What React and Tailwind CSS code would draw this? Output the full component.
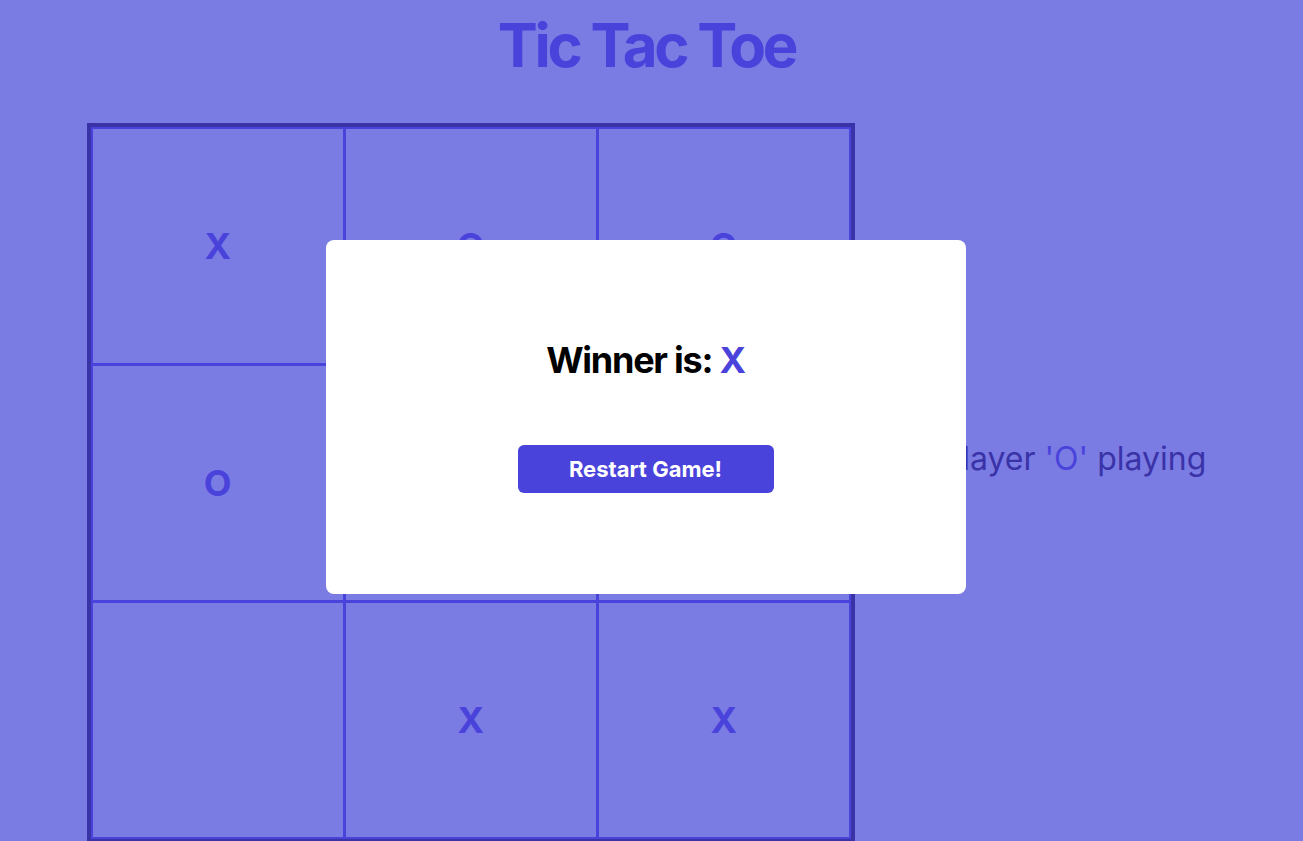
import React, { useState } from 'react';

// board state as shown: X won on the diagonal
const initialBoard = ['X', 'O', 'O', 'O', 'X', '', '', 'X', 'X'];

function Cell({ value }) {
  return (
    <div className="h-[234px] bg-[#7b7be4] flex items-center justify-center">
      <span className="text-4xl font-bold text-[#4a43db] leading-none">{value}</span>
    </div>
  );
}

export default function App() {
  const [board, setBoard] = useState(initialBoard);
  const [winner, setWinner] = useState('X');

  const restart = () => {
    setBoard(Array(9).fill(''));
    setWinner(null);
  };

  return (
    <div className="min-h-screen bg-[#7b7be4] font-['Inter',sans-serif] pr-[10px] pb-4">
      <h1 className="pt-[15px] text-center text-6xl leading-none font-bold tracking-[-0.055em] text-[#4a43db]">
        Tic Tac Toe
      </h1>

      <div className="mt-12 flex items-center justify-center gap-[87px]">
        {/* Board */}
        <div className="w-[768px] border-4 border-[#3a33a8]">
          <div className="grid grid-cols-3 gap-[3px] p-[2px] bg-[#4a43db]">
            {board.map((v, i) => (
              <Cell key={i} value={v} />
            ))}
          </div>
        </div>

        {/* Turn info */}
        <p className="pb-12 text-[32px] text-[#3a33a8]">
          Player <span className="text-[#4a43db]">'O'</span> playing
        </p>
      </div>

      {/* Winner modal */}
      {winner && (
        <div className="fixed inset-0 flex items-center justify-center">
          <div className="w-[640px] h-[354px] -translate-x-[6px] -translate-y-[4px] bg-white rounded-lg flex flex-col items-center justify-center gap-[65px]">
            <h2 className="text-4xl font-bold tracking-[-0.035em] text-black">
              Winner is: <span className="text-[#4a43db]">{winner}</span>
            </h2>
            <button
              onClick={restart}
              className="w-64 h-12 rounded-md bg-[#4a43db] text-white text-[22px] font-bold"
            >
              Restart Game!
            </button>
          </div>
        </div>
      )}
    </div>
  );
}
